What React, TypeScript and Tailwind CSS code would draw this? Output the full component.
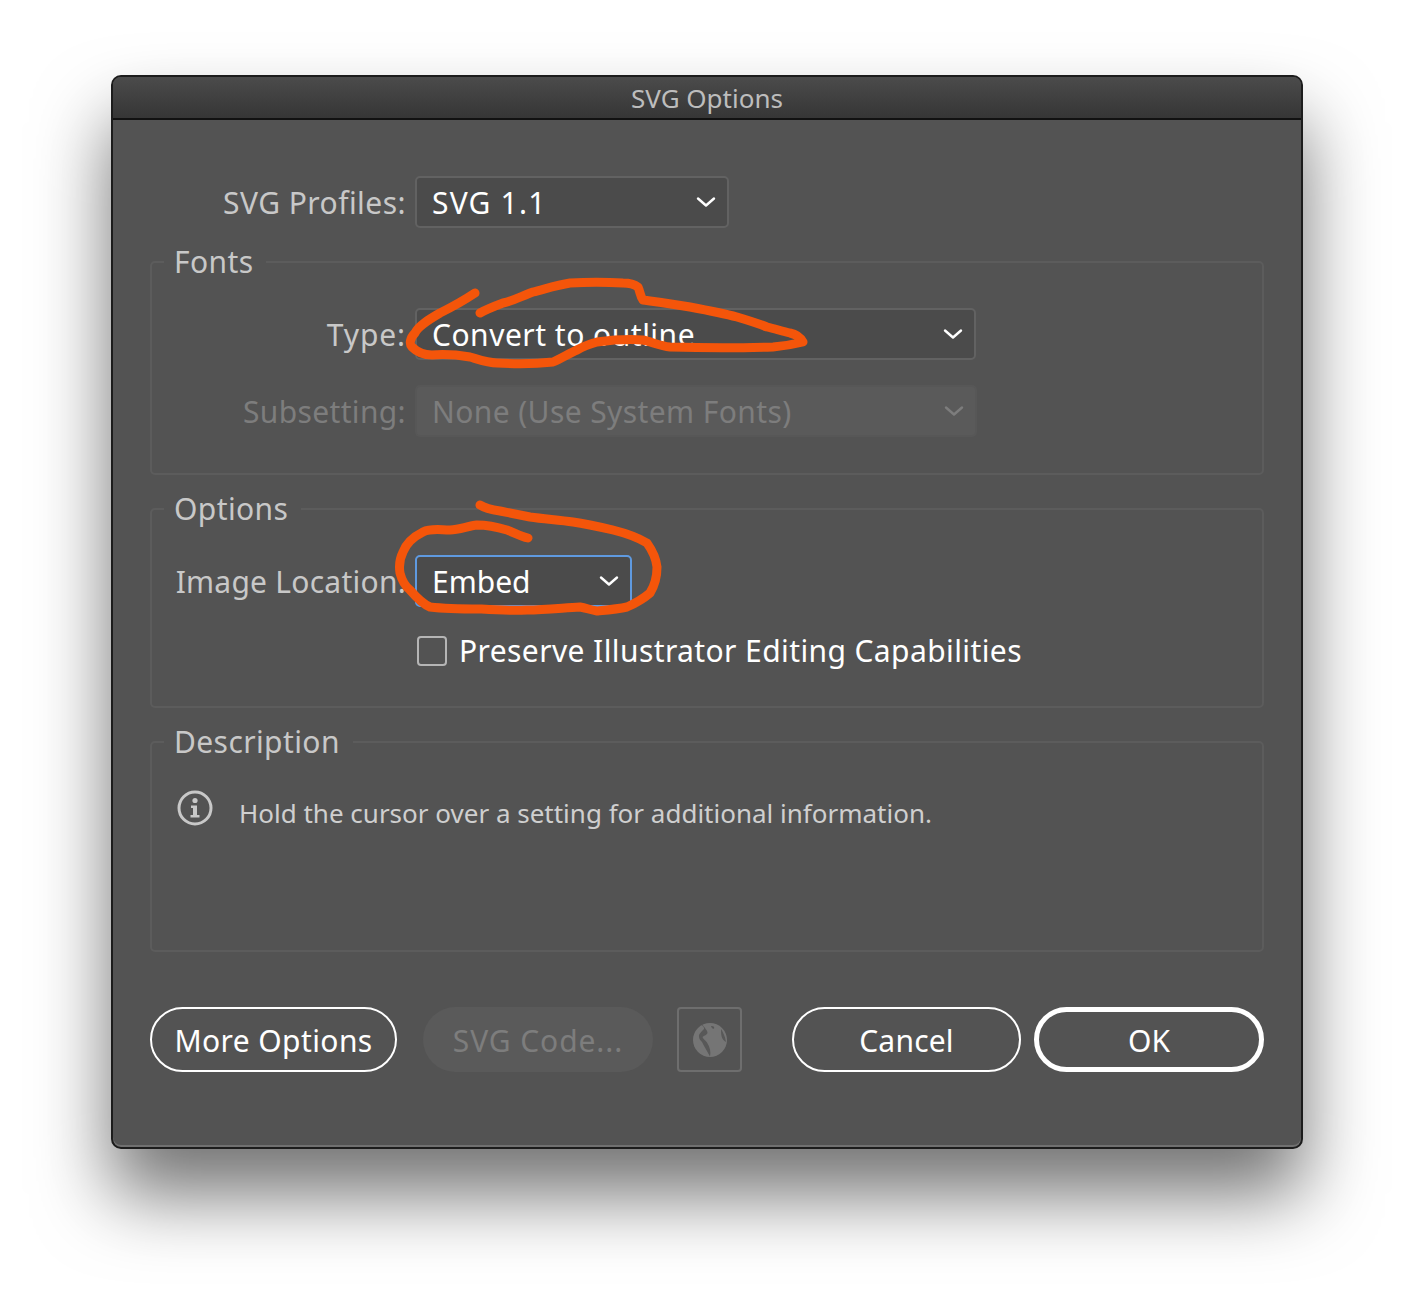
import React from 'react';

const Chevron = () => (
  <svg width="20" height="12" viewBox="0 0 20 12" fill="none" stroke="currentColor" strokeWidth="2.4" strokeLinecap="round" strokeLinejoin="round">
    <path d="M2 2.5 L10 9.5 L18 2.5" />
  </svg>
);

const Select = ({ label, width, disabled, focused }: { label: string; width: string; disabled?: boolean; focused?: boolean }) => {
  let cls = 'border-[#626262] bg-[#4b4b4b] text-white';
  if (disabled) cls = 'border-[#575757] bg-[#5a5a5a] text-[#7d7d7d]';
  if (focused) cls = 'border-[#5f9ae0] bg-[#4b4b4b] text-white';
  return (
    <div className={`flex h-[52px] items-center justify-between rounded-[5px] border-2 pl-[15px] pr-[11px] text-[30px] ${width} ${cls}`}>
      <span>{label}</span>
      <Chevron />
    </div>
  );
};

const Row = ({ label, disabled, tracking = 'tracking-[0.45px]', children }: { label: string; disabled?: boolean; tracking?: string; children: React.ReactNode }) => (
  <div className="flex items-center gap-[9px]">
    <div className={`w-[254px] whitespace-nowrap text-right text-[30px] ${tracking} ${disabled ? 'text-[#7d7d7d]' : 'text-[#c8c8c8]'}`}>{label}</div>
    {children}
  </div>
);

const Group = ({ title, height, children }: { title: string; height: string; children: React.ReactNode }) => (
  <div className={`relative rounded-[5px] border-2 border-[#5c5c5c] ${height}`}>
    <div className="absolute left-[12px] top-[-21px] bg-[#535353] pl-[10px] pr-[13px] text-[30px] leading-[40px] tracking-[0.4px] text-[#c8c8c8]">{title}</div>
    {children}
  </div>
);

const Pill = ({ label, width, primary, disabled }: { label: string; width: string; primary?: boolean; disabled?: boolean }) => {
  let cls = 'border-2 border-white text-white';
  if (primary) cls = 'border-[5px] border-white text-white';
  if (disabled) cls = 'bg-[#5a5a5a] text-[#7d7d7d]';
  return <div className={`flex h-[65px] items-center justify-center rounded-full pt-[2px] text-[30px] ${width} ${cls}`}>{label}</div>;
};

const App = () => {
  return (
    <div className="relative h-[1296px] w-[1414px] overflow-hidden bg-white pl-[111px] pt-[75px] font-['Noto_Sans',sans-serif]">
      <div className="h-[1074px] w-[1192px] overflow-hidden rounded-[10px] border-2 border-[#1c1c1c] bg-[#535353] shadow-[0_46px_75px_rgba(0,0,0,0.55),inset_0_-2px_0_#707070]">
        <div className="flex h-[43px] items-center justify-center border-b-2 border-[#111] bg-gradient-to-b from-[#4b4b4b] to-[#363636] pt-[2px] text-[26px] text-[#bdbdbd]">
          SVG Options
        </div>
        <div className="px-[37px] pt-[56px]">
          <div className="ml-[2px]">
            <Row label="SVG Profiles:">
              <Select label="SVG 1.1" width="w-[314px] tracking-[1.2px]" />
            </Row>
          </div>

          <div className="mt-[33px]">
            <Group title="Fonts" height="h-[214px]">
              <div className="flex flex-col gap-[25px] pt-[45px]">
                <Row label="Type:" tracking="tracking-[0.9px]">
                  <Select label="Convert to outline" width="w-[561px] tracking-[0.5px]" />
                </Row>
                <Row label="Subsetting:" tracking="tracking-[0.35px]" disabled>
                  <Select label="None (Use System Fonts)" width="w-[562px] tracking-[0.4px]" disabled />
                </Row>
              </div>
            </Group>
          </div>

          <div className="mt-[33px]">
            <Group title="Options" height="h-[200px]">
              <div className="pt-[45px]">
                <Row label="Image Location:" tracking="tracking-[0.25px]">
                  <Select label="Embed" width="w-[217px]" focused />
                </Row>
                <div className="ml-[265px] mt-[21px] flex items-center gap-[12px] text-[30px] tracking-[0.4px] text-white">
                  <div className="h-[30px] w-[30px] rounded-[4px] border-2 border-[#b5b5b5]" />
                  <span>Preserve Illustrator Editing Capabilities</span>
                </div>
              </div>
            </Group>
          </div>

          <div className="mt-[33px]">
            <Group title="Description" height="h-[211px]">
              <div className="flex items-start gap-[26px] pl-[25px] pt-[47px]">
                <svg width="36" height="36" viewBox="0 0 36 36" fill="none" className="text-[#c8c8c8]">
                  <circle cx="18" cy="18" r="16" stroke="currentColor" strokeWidth="3" />
                  <circle cx="18" cy="10.5" r="2.6" fill="currentColor" />
                  <path d="M14 15.5 H20 V25 H22.5 V27.5 H13.5 V25 H16 V18 H14 Z" fill="currentColor" />
                </svg>
                <span className="mt-[5px] text-[26px] leading-[36px] text-[#cfcfcf]">Hold the cursor over a setting for additional information.</span>
              </div>
            </Group>
          </div>

          <div className="mt-[55px] flex items-center">
            <Pill label="More Options" width="w-[247px] tracking-[0.4px]" />
            <div className="ml-[26px]">
              <Pill label="SVG Code..." width="w-[230px] tracking-[0.9px]" disabled />
            </div>
            <div className="ml-[24px] flex h-[65px] w-[65px] items-center justify-center rounded-[4px] border-2 border-[#6e6e6e]">
              <svg width="36" height="36" viewBox="0 0 36 36">
                <circle cx="18" cy="18" r="17" fill="#757575" />
                <path d="M9 2.5 C11 4 12.5 5.5 12 7 C10 9 8 11 7 13 C6.5 16 8 18 10 20 C12 24 15 29 18 34.5 C19 30 18 25 15 20.5 C13 18 11 16.5 10.5 15 C12 13.5 15 13 15.5 11 C15.5 9 14 7.5 13 6 C12 4.5 11 3 9 2.5 Z" fill="#585858" />
                <path d="M29 7 C31 10 33 14 34 20 C32 19 30 17 29.5 14 C29 11 29 9 29 7 Z" fill="#585858" />
                <path d="M19 4 C21 3.5 23 5 22 6.5 C21 7.5 19.5 6 19 4 Z" fill="#585858" />
              </svg>
            </div>
            <div className="ml-[50px]">
              <Pill label="Cancel" width="w-[229px] tracking-[0.2px]" />
            </div>
            <div className="ml-[13px]">
              <Pill label="OK" width="w-[230px]" primary />
            </div>
          </div>
        </div>
      </div>

      {/* hand-drawn annotation on top of the dialog */}
      <svg className="pointer-events-none absolute left-0 top-0" width="1414" height="1296" viewBox="0 0 1414 1296" fill="none" stroke="#f4550a" strokeWidth="9" strokeLinecap="round" strokeLinejoin="round">
        <path d="M475 293 C460 303 450 308 440 313 C428 320 418 326 415 333 C410 338 409 344 412 347 C418 353 424 355 432 355 C445 354 458 355 470 357 C480 360 488 363 497 363 C515 364 535 364 553 362 C562 358 570 353 577 350 C584 346 590 344 597 342 C612 340 628 339 643 340 C652 342 660 346 670 347 C705 348 740 348 773 347 C785 346 795 344 803 342 C800 337 795 334 790 333 C782 331 775 329 767 327 C757 323 747 320 737 317 C722 313 706 310 690 307 C674 304 658 302 643 300 C640 296 640 291 638 287 C634 284 628 283 623 283 C605 282 588 282 570 283 C557 285 545 289 533 292 C522 296 513 301 503 303 C495 306 487 309 480 313" />
        <path d="M528 538 C520 536 513 532 507 530 C497 527 487 525 477 525 C468 526 459 530 450 530 C440 530 431 528 423 532 C413 537 406 544 403 552 C399 560 399 567 400 573 C402 581 405 586 410 590 C416 597 423 604 430 607 C447 609 463 609 480 609 C496 610 511 611 527 610 C545 610 562 608 580 607 C586 608 591 610 597 611 C607 610 618 609 627 607 C636 603 643 599 650 593 C655 585 657 576 657 567 C656 558 652 550 647 543 C637 537 625 533 613 530 C600 527 587 524 573 522 C559 520 544 519 530 517 C520 515 510 513 500 511 C493 510 486 509 480 505" />
      </svg>
    </div>
  );
};

export default App;
